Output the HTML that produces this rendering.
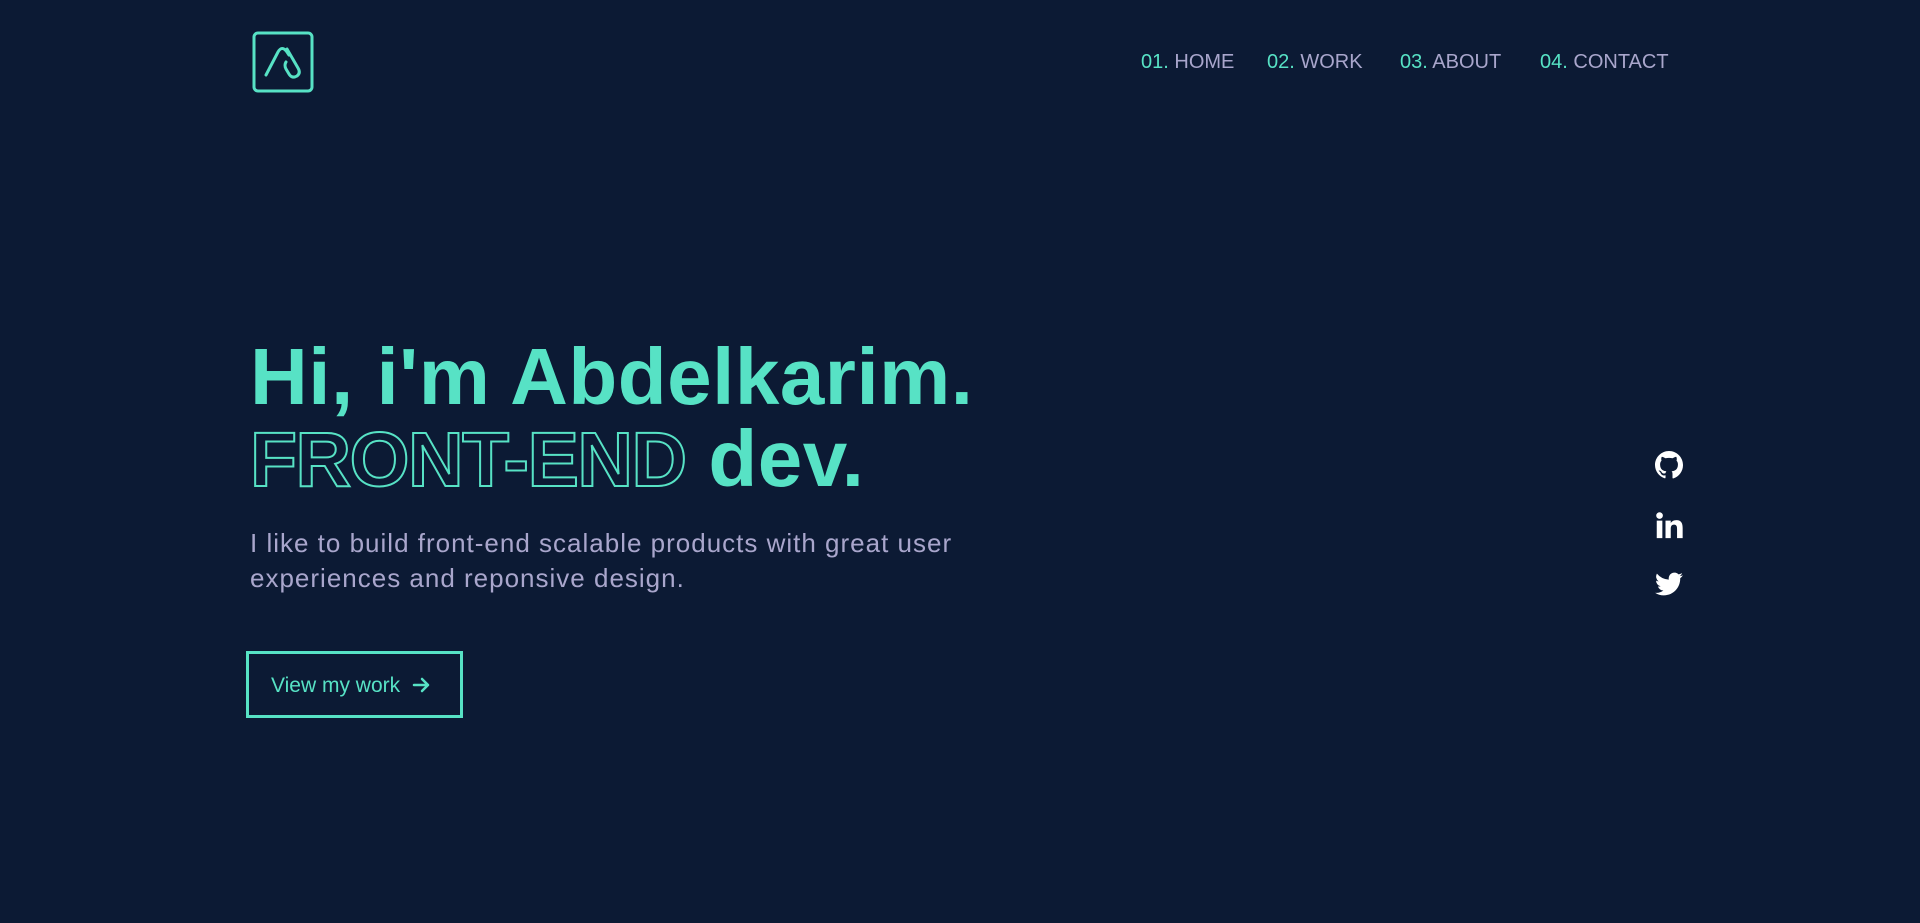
<!DOCTYPE html>
<html><head><meta charset="utf-8"><style>
*{margin:0;padding:0;box-sizing:border-box}
body{width:1920px;height:923px;background:#0c1a34;font-family:"Liberation Sans",sans-serif;position:relative;overflow:hidden}
.nav{position:absolute;top:51px;font-size:20px;color:#a9a6cc;white-space:nowrap}
.nav span{color:#57e2c5}
h1{position:absolute;left:250px;top:336px;font-size:80px;font-weight:bold;color:#57e2c5;line-height:82px;letter-spacing:0.5px;white-space:nowrap}
.out{color:transparent;-webkit-text-stroke:2px #57e2c5;letter-spacing:-1.5px;font-size:77px}
p{position:absolute;left:250px;top:526px;font-size:26px;line-height:35px;color:#a9a6cc;width:760px;letter-spacing:1px}
.btn{position:absolute;left:246px;top:651px;width:217px;height:67px;border:3px solid #57e2c5;color:#57e2c5;font-size:21px;padding:20px 0 0 22px}
.ic{position:absolute;left:1655px;width:28px;height:28px}
</style></head><body>
<svg style="position:absolute;left:252px;top:31px" width="62" height="62" viewBox="0 0 62 62" fill="none" stroke="#57e2c5" stroke-width="3" stroke-linecap="round" stroke-linejoin="round">
<rect x="2" y="2" width="58" height="58" rx="4"/>
<path d="M14 44 L26 21 Q30 14 35 21 L37 24 M34 31 Q32 34 34 38 L37 43 Q40 48 45 45 Q49 42 46 37 L35 18"/>
</svg>
<div class="nav" style="left:1141px"><span>01.</span> HOME</div>
<div class="nav" style="left:1267px"><span>02.</span> WORK</div>
<div class="nav" style="left:1400px"><span>03.</span> ABOUT</div>
<div class="nav" style="left:1540px"><span>04.</span> CONTACT</div>
<h1>Hi, i'm Abdelkarim.<br><span class="out">FRONT-END</span> dev.</h1>
<p>I like to build front-end scalable products with great user experiences and reponsive design.</p>
<div class="btn">View my work &nbsp;<svg width="18" height="16" viewBox="0 0 18 16" fill="none" stroke="#57e2c5" stroke-width="2.5" stroke-linecap="round" stroke-linejoin="round" style="vertical-align:-1px"><path d="M2 8h14M10 2l6 6-6 6"/></svg></div>
<svg class="ic" style="top:451px" viewBox="0 0 16 16" fill="#fff"><path d="M8 0C3.58 0 0 3.58 0 8c0 3.54 2.29 6.53 5.47 7.59.4.07.55-.17.55-.38v-1.33c-2.23.48-2.7-1.07-2.7-1.07-.36-.92-.89-1.17-.89-1.17-.73-.5.06-.49.06-.49.8.06 1.23.83 1.23.83.71 1.22 1.87.87 2.33.66.07-.52.28-.87.5-1.07-1.78-.2-3.64-.89-3.64-3.95 0-.87.31-1.59.82-2.15-.08-.2-.36-1.02.08-2.12 0 0 .67-.21 2.2.82a7.6 7.6 0 014 0c1.53-1.04 2.2-.82 2.2-.82.44 1.1.16 1.92.08 2.12.51.56.82 1.27.82 2.15 0 3.07-1.87 3.75-3.65 3.95.29.25.54.73.54 1.48v2.2c0 .21.15.46.55.38A8 8 0 0016 8c0-4.42-3.58-8-8-8z"/></svg>
<svg class="ic" style="top:511px" viewBox="0 0 16 16" fill="#fff"><rect x="1" y="5.5" width="3.2" height="10"/><circle cx="2.6" cy="2.6" r="1.9"/><path d="M6 5.5h3v1.4c.5-.9 1.6-1.7 3.2-1.7 3 0 3.6 2 3.6 4.6v5.7h-3.2v-5c0-1.2 0-2.7-1.700-2.7s-1.9 1.3-1.9 2.6v5.1H6z"/></svg>
<svg class="ic" style="top:570px" viewBox="0 0 16 16" fill="#fff"><path d="M16 3a6.6 6.6 0 01-1.9.5 3.3 3.3 0 001.4-1.8 6.6 6.6 0 01-2 .8 3.3 3.3 0 00-5.6 3A9.3 9.3 0 011.1 2.1a3.3 3.3 0 001 4.4 3.3 3.3 0 01-1.5-.4 3.3 3.3 0 002.6 3.2 3.3 3.3 0 01-1.5.1 3.3 3.3 0 003.1 2.3A6.6 6.6 0 010 13a9.3 9.3 0 005 1.5c6 0 9.4-5 9.4-9.4v-.4A6.7 6.7 0 0016 3z"/></svg>
</body></html>
